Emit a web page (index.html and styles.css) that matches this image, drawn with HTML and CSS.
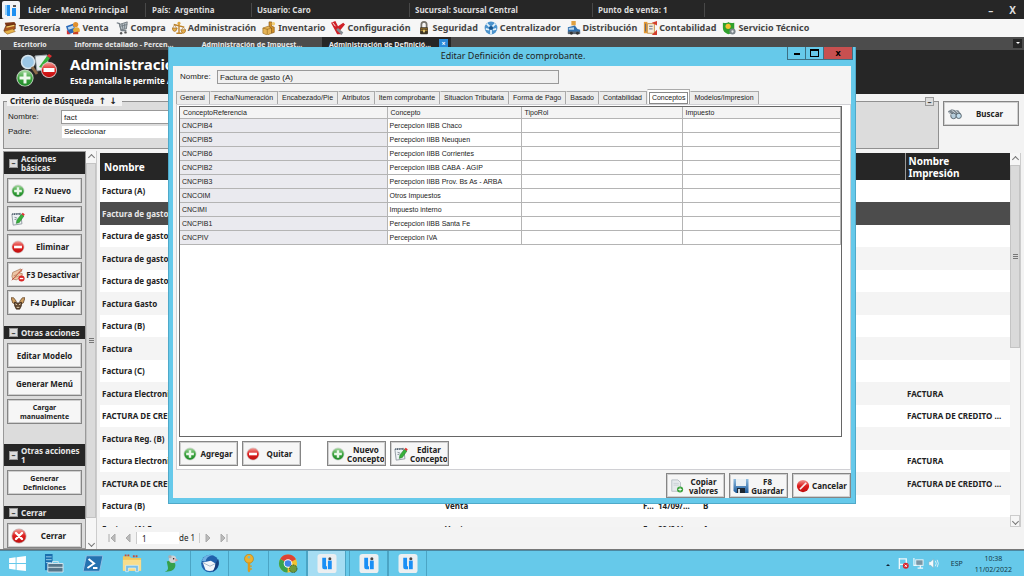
FILE: index.html
```html
<!DOCTYPE html>
<html lang="es">
<head>
<meta charset="utf-8">
<title>Líder - Menú Principal</title>
<link rel="stylesheet" href="styles.css">
</head>
<body>
<svg class="sprite" aria-hidden="true">
  <defs>
    <linearGradient id="gGreen" x1="0" y1="0" x2="0" y2="1"><stop offset="0" stop-color="#a5d8a0"/><stop offset=".5" stop-color="#3aa33c"/><stop offset="1" stop-color="#1f8a2a"/></linearGradient>
    <linearGradient id="gRed" x1="0" y1="0" x2="0" y2="1"><stop offset="0" stop-color="#f29a94"/><stop offset=".5" stop-color="#dd1c1c"/><stop offset="1" stop-color="#c01010"/></linearGradient>
    <linearGradient id="gBlue" x1="0" y1="0" x2="0" y2="1"><stop offset="0" stop-color="#8fbde0"/><stop offset="1" stop-color="#1c5a9c"/></linearGradient>
  </defs>
  <symbol id="i-logo" viewBox="0 0 18 18"><rect width="18" height="18" rx="2" fill="#f1f3f5"/><rect x="3" y="4" width="2" height="10" fill="#8fcbf8"/><rect x="5" y="4" width="3" height="11" fill="#1e90f0"/><rect x="11" y="4" width="3" height="2" fill="#555"/><rect x="10" y="7" width="4" height="8" fill="#1e90f0"/></symbol>
  <symbol id="i-app" viewBox="0 0 20 20"><rect width="20" height="20" rx="3" fill="#eceff1"/><path d="M5 4h4v9h1v3H7q-2 0-2-2z" fill="#1a8ff5"/><circle cx="13" cy="5" r="1.600" fill="#444"/><rect x="11" y="7" width="4" height="9" fill="#1a8ff5"/></symbol>
  <symbol id="i-plus" viewBox="0 0 16 16"><circle cx="8" cy="8" r="7.4" fill="#cfd6cf"/><circle cx="8" cy="8" r="6.6" fill="url(#gGreen)"/><path d="M6.6 3.6h2.8v3h3v2.8h-3v3H6.6v-3h-3V6.600h3z" fill="#e9f7e8"/></symbol>
  <symbol id="i-minus" viewBox="0 0 16 16"><circle cx="8" cy="8" r="7.400" fill="#d9caca"/><circle cx="8" cy="8" r="6.600" fill="url(#gRed)"/><rect x="3.500" y="6.500" width="9" height="3" fill="#fff"/></symbol>
  <symbol id="i-x" viewBox="0 0 16 16"><circle cx="8" cy="8" r="7.600" fill="#c8b5b5"/><circle cx="8" cy="8" r="6.800" fill="url(#gRed)"/><path d="M5 5l6 6M11 5l-6 6" stroke="#fff" stroke-width="2.400" stroke-linecap="round"/></symbol>
  <symbol id="i-cancel" viewBox="0 0 16 16"><circle cx="8" cy="8" r="7" fill="url(#gRed)"/><path d="M3.800 11L11 3.800l1.400 1.400L5.200 12.400z" fill="#f7eded"/></symbol>
  <symbol id="i-edit" viewBox="0 0 16 16"><path d="M1 2.500l10-1 1.500 12-10 1.500z" fill="#eef2f5" stroke="#8a949c"/><path d="M1.500 2.500h10" stroke="#456" stroke-dasharray="1 1" stroke-width="2"/><path d="M6 13l.8-4L12 2.500l2.800 2L9.500 12z" fill="#37b03a" stroke="#22772a" stroke-width=".6"/><path d="M12 2.500L13.300 .8l2.400 1.900-1.100 1.800z" fill="#e03030"/><path d="M4 6l3 1M4 8.500h2" stroke="#7c8790"/></symbol>
  <symbol id="i-hand" viewBox="0 0 16 16"><path d="M2 5l9-4 1.500 2.500L9 5.500l4 1-1 4-6 3-4-1-1-3z" fill="#eec6a5" stroke="#a4714c" stroke-width=".8"/><path d="M1 14L13 1" stroke="#c23b2a"/><path d="M3 9l5-2M4 11l5-2" stroke="#b58360" stroke-width=".8"/><circle cx="12" cy="12" r="3.500" fill="#da2525"/><rect x="10" y="11.300" width="4" height="1.500" fill="#fff"/></symbol>
  <symbol id="i-masks" viewBox="0 0 16 16"><path d="M0 2l3 0 3 4-1 3-3-1zM16 2l-3 0-3 4 1 3 3-1z" fill="#d0a062" stroke="#53351b" stroke-width=".8"/><path d="M4 7l4 1 4-1 0 4-2 4H6l-2-4z" fill="#5f4630" stroke="#2e1d10" stroke-width=".7"/><path d="M5 9l2 1M11 9l-2 1M6.500 13h3" stroke="#f0dfc0"/></symbol>
  <symbol id="i-save" viewBox="0 0 16 16"><path d="M.5 1h15v14H3L.5 13z" fill="url(#gBlue)"/><rect x="3" y="1" width="10" height="7" fill="#e9f0f4"/><rect x="4" y="10" width="8" height="5" fill="#1d2833"/><rect x="5" y="11" width="2" height="4" fill="#cdd6dc"/></symbol>
  <symbol id="i-copy" viewBox="0 0 16 16"><path d="M2 1h7l3 3v10H2z" fill="#e5e9ec" stroke="#b4bcc2"/><path d="M4 5h6M4 7h6" stroke="#c8d0d5"/><circle cx="11.500" cy="12" r="3.500" fill="#3aa33c"/><path d="M11.500 10v4M9.500 12h4" stroke="#fff"/></symbol>
  <symbol id="i-binoc" viewBox="0 0 16 12"><path d="M1 3l4-2 4 1 3 0 3 4-1 3-8-1-4-3z" fill="#7b868e"/><circle cx="7" cy="8" r="3" fill="#b6cddb" stroke="#59656e"/><circle cx="12.500" cy="8" r="2.800" fill="#c0dbea" stroke="#59656e"/><path d="M2 4l3 3M5 2l4 3M9 2l3 3" stroke="#d3dade"/></symbol>
  <symbol id="i-chest" viewBox="0 0 16 16"><path d="M2 2l11-1 2 3-11 4z" fill="#7a3514"/><path d="M3 6l11-2v5L4 13 1 11z" fill="#a9551f" stroke="#54260d" stroke-width=".7"/><path d="M1 12l10-3 3 3-9 3z" fill="#e7b44a" stroke="#8c571a" stroke-width=".6"/><path d="M4 7l9-2" stroke="#f2cf6a" stroke-width="1.500"/></symbol>
  <symbol id="i-people" viewBox="0 0 16 16"><path d="M0 6l8-3 4 9-9 3z" fill="#2b6ab8"/><path d="M2 7l6-2 1 3-6 2z" fill="#b9d8f2"/><circle cx="11" cy="4" r="3" fill="#e0902e"/><path d="M8 11q0-4 4-4t4 5l-6 2z" fill="#e6ac38"/><path d="M1 10l4 5-4 0z" fill="#d53434"/><path d="M8 13l6-1v3H8z" fill="#c84024"/></symbol>
  <symbol id="i-cart" viewBox="0 0 16 16"><path d="M2 2l3 1 2 8h6" fill="none" stroke="#767f86" stroke-width="1.500"/><path d="M5 4l9-3-1 8-6 1z" fill="#b7c0c6" stroke="#6d767c"/><path d="M8 3l1 6M11 3v6M6 6l8-2" stroke="#707a80"/><circle cx="7" cy="14" r="1.400" fill="#555"/><circle cx="12" cy="13" r="1.400" fill="#555"/></symbol>
  <symbol id="i-scale" viewBox="0 0 16 16"><path d="M2 4l12 3M8 3v10M5 14h7" stroke="#c08328" stroke-width="1.600"/><path d="M0 8h6q-1 4-3 4T0 8zM10 10h6q-1 4-3 4t-3-4z" fill="#e5ae4c" stroke="#9c6518" stroke-width=".7"/><path d="M3 4L1 8M3 4l2 4M13 7l-2 3M13 7l2 3" stroke="#a97a35" stroke-width=".7"/><circle cx="8" cy="2.500" r="1.700" fill="#e0a840"/></symbol>
  <symbol id="i-box" viewBox="0 0 16 16"><path d="M1 8l6-2 4 2v6l-5 2-5-2z" fill="#e6b455" stroke="#95661a" stroke-width=".7"/><path d="M6 9v6M1 8l5 1.500L11 8" fill="none" stroke="#95661a" stroke-width=".7"/><path d="M8 1h3v5l3 1v6l-3 1V8L8 6z" fill="#d69428" stroke="#80500f" stroke-width=".7"/><circle cx="13" cy="3" r="2" fill="#f1cd72"/></symbol>
  <symbol id="i-tools" viewBox="0 0 16 16"><path d="M0 2l5-2 3 6 6-4 2 2-6 7 2 4H7z" fill="#cf2027"/><path d="M8 8l6 5-2 3-6-6z" fill="#858d93"/><path d="M2 2l3 4" stroke="#fff"/></symbol>
  <symbol id="i-lock" viewBox="0 0 14 16"><path d="M4 8V4q0-3 3-3t3 3v4" fill="none" stroke="#77736c" stroke-width="2"/><rect x="2.500" y="7" width="9" height="8" rx="1" fill="#3d3423"/><path d="M3 9h8M3 11h8" stroke="#b98d33"/><rect x="6" y="10" width="2" height="3" fill="#efd57c"/></symbol>
  <symbol id="i-globe" viewBox="0 0 16 16"><circle cx="8" cy="8" r="7.300" fill="#4b93cd"/><path d="M3 3l4 4M13 3L9 7M8 9v6M2 9l4 1M14 9l-4 1" stroke="#e4f2fb" stroke-width="2"/><circle cx="8" cy="8" r="2.400" fill="#16558f"/></symbol>
  <symbol id="i-truck" viewBox="0 0 16 16"><path d="M5 0h5v5H5z" fill="#e0a040"/><path d="M1 7l8-2 3 4 3 1v4H1z" fill="#2f6fae"/><path d="M2 8l6-1v3H2z" fill="#b7d5ec"/><path d="M1 12h14v3H1z" fill="#5b6670"/><circle cx="5" cy="14" r="1.700" fill="#333"/><circle cx="12" cy="14" r="1.700" fill="#333"/></symbol>
  <symbol id="i-ledger" viewBox="0 0 16 16"><path d="M1 1h4v13H1z" fill="#e69b35"/><path d="M5 3h8v11H5z" fill="#f6ecd9" stroke="#c58b3c"/><path d="M7 6h4M7 9h4M3 3v9" stroke="#4a5f86"/><path d="M10 2l6-2v5zM10 16l6-6v6z" fill="#d43d2c"/></symbol>
  <symbol id="i-service" viewBox="0 0 16 16"><path d="M1 2q6 1 6-1 2 2 7 1v7q0 5-7 6-6-2-6-7z" fill="#2fa12d"/><circle cx="7" cy="6" r="3" fill="#f4bf2f"/><circle cx="12" cy="12" r="3.500" fill="#7b858b"/><circle cx="12" cy="12" r="1.300" fill="#e5e8ea"/></symbol>
  <symbol id="i-hero" viewBox="0 0 42 34"><path d="M19 2l12-1 2 14-12 2z" fill="#e8edf0" stroke="#9aa4ab"/><path d="M23 13l8-11 3 2-8 10z" fill="#37b03a"/><path d="M31 2l2-2 3 2-2 2z" fill="#e03030"/><circle cx="12" cy="8" r="6.500" fill="#9cc7e6" stroke="#d7e4ec" stroke-width="1.500"/><path d="M16 13l5 7" stroke="#8b6a48" stroke-width="3"/><circle cx="33" cy="16" r="8" fill="#dcc8c8"/><circle cx="33" cy="16" r="7.200" fill="url(#gRed)"/><rect x="27.500" y="14" width="11" height="4" fill="#fff"/><circle cx="9" cy="24" r="8.600" fill="#c9d6c9"/><circle cx="9" cy="24" r="7.700" fill="url(#gGreen)"/><path d="M7.500 18.500h3v4h4v3h-4v4h-3v-4h-4v-3h4z" fill="#eef9ee"/></symbol>
  <symbol id="t-win" viewBox="0 0 18 16"><path d="M0 2.300l7-1v6.200H0zM8 1.200L18 0v7.500H8zM0 8.500h7v6.200l-7-1zM8 8.500h10V16L8 14.800z" fill="#fff"/></symbol>
  <symbol id="t-server" viewBox="0 0 21 20"><rect x="1" width="8" height="17" fill="#1a6fae"/><path d="M2 3h6M2 6h6M2 9h6" stroke="#9fd0ee"/><path d="M4 10h16v9H4z" fill="#56768a" stroke="#d6e6ee"/><path d="M9 10V8h6v2M4 14h16" fill="none" stroke="#d6e6ee"/></symbol>
  <symbol id="t-ps" viewBox="0 0 18 16"><path d="M3 1h15l-3 14H0z" fill="#2572b0" stroke="#8cc1e5"/><path d="M5 4l5 4-6 4M9 12h4" fill="none" stroke="#fff" stroke-width="1.700"/></symbol>
  <symbol id="t-folder" viewBox="0 0 22 20"><path d="M1 2h7l2 2h11v14H1z" fill="#f0c75c"/><path d="M3 1h6M12 2h6" stroke="#c84c34" stroke-width="2" stroke-dasharray="2 1"/><path d="M1 6h20v12H1z" fill="#f8dd8c"/><path d="M4 19v-7h14v7h-3v-4H7v4z" fill="#79bfe8" stroke="#e6f5fd" stroke-width=".7"/></symbol>
  <symbol id="t-parrot" viewBox="0 0 14 18"><path d="M3 7q3-1 5 0l3 2q1 5-4 7l-6 1q4-2 3-5z" fill="#35a04a"/><circle cx="8.500" cy="5" r="3.500" fill="#cfd3d6"/><circle cx="6" cy="2.500" r="1.600" fill="#a9aeb2"/><path d="M11 4l3 2-3 1z" fill="#d89a9a"/><circle cx="9.500" cy="4.500" r=".7" fill="#311"/></symbol>
  <symbol id="t-bird" viewBox="0 0 22 20"><circle cx="11" cy="10" r="9.700" fill="#2161ab"/><path d="M3 9l9-2 5 3v6q-5 4-11 1z" fill="#f2f6fa"/><path d="M3 9l8 4 6-3" fill="none" stroke="#9fb3c5"/><path d="M2 7Q5-1 14 1q-7 1-8 7z" fill="#6fb1e4"/><path d="M20 5q3 9-6 14 3-6 3-9z" fill="#163f7c"/></symbol>
  <symbol id="t-key" viewBox="0 0 10 20"><circle cx="5" cy="5" r="4.700" fill="#eeb02c" stroke="#ac7410" stroke-width=".6"/><circle cx="5" cy="3.500" r="1.300" fill="#63bddc"/><path d="M3.700 9h2.600v9L5 19.500 3.700 18zM6 12h2v1.500H6zM6 15h2v1.500H6z" fill="#dd9a1c"/></symbol>
  <symbol id="t-chrome" viewBox="0 0 20 20"><circle cx="10" cy="10" r="9.500" fill="#f2c230"/><path d="M10 10L1.800 5.200A9.500 9.500 0 0 1 18.400 5.500z" fill="#dd4335"/><path d="M10 10L1.800 5.200A9.500 9.500 0 0 0 9.500 19.500z" fill="#38a350"/><circle cx="10" cy="10" r="4.500" fill="#fff"/><circle cx="10" cy="10" r="3.500" fill="#3f84e8"/><circle cx="15.500" cy="15.500" r="4" fill="#6d9a3d" stroke="#25461a" stroke-dasharray="1 1"/></symbol>
  <symbol id="y-flag" viewBox="0 0 12 12"><path d="M1.500 0v12M2 1h7v6H2" fill="none" stroke="#eef8fc" stroke-width="1.500"/><circle cx="8.500" cy="8.500" r="3.200" fill="#d8242c"/><path d="M7.300 7.300l2.400 2.400M9.700 7.300L7.300 9.700" stroke="#fff"/></symbol>
  <symbol id="y-net" viewBox="0 0 12 12"><rect x="3" y="2" width="8" height="6" fill="#7a96a4" stroke="#eef8fc"/><path d="M1 0v8h3M5 11h6M8 8v3" fill="none" stroke="#eef8fc" stroke-width="1.300"/></symbol>
  <symbol id="y-vol" viewBox="0 0 12 12"><path d="M1 4h2l3-3v10L3 8H1z" fill="#f4fafd" stroke="#7fa9bb" stroke-width=".5"/><path d="M8 3q2 3 0 6M10 2q2.500 4 0 8" fill="none" stroke="#e0f1f8"/></symbol>
</svg>

<div class="app">
  <header class="titlebar">
    <svg class="titlebar-logo"><use href="#i-logo"/></svg>
    <span class="tb-cell tb-name">Líder &nbsp;- Menú Principal</span>
    <span class="tb-cell tb-pais">País:&nbsp; Argentina</span>
    <span class="tb-cell tb-user">Usuario: Caro</span>
    <span class="tb-cell tb-suc">Sucursal: Sucursal Central</span>
    <span class="tb-cell tb-pv">Punto de venta: 1</span>
    <span class="tb-cell tb-win"><button type="button" aria-label="Minimizar">–</button><button type="button" aria-label="Cerrar ventana">X</button></span>
  </header>

  <nav class="menubar">
    <button type="button"><svg><use href="#i-chest"/></svg>Tesorería</button>
    <button type="button"><svg><use href="#i-people"/></svg>Venta</button>
    <button type="button"><svg><use href="#i-cart"/></svg>Compra</button>
    <button type="button"><svg><use href="#i-scale"/></svg>Administración</button>
    <button type="button"><svg><use href="#i-box"/></svg>Inventario</button>
    <button type="button"><svg><use href="#i-tools"/></svg>Configuración</button>
    <button type="button"><svg><use href="#i-lock"/></svg>Seguridad</button>
    <button type="button"><svg><use href="#i-globe"/></svg>Centralizador</button>
    <button type="button"><svg><use href="#i-truck"/></svg>Distribución</button>
    <button type="button"><svg><use href="#i-ledger"/></svg>Contabilidad</button>
    <button type="button"><svg><use href="#i-service"/></svg>Servicio Técnico</button>
  </nav>

  <div class="doctabs">
    <button type="button" class="doctab doctab-home">Escritorio</button>
    <button type="button" class="doctab">Informe detallado - Percen...</button>
    <button type="button" class="doctab">Administración de Impuest...</button>
    <div class="doctab-current">
      <button type="button" class="doctab">Administración de Definició...</button>
      <button type="button" class="doctab-close" aria-label="Cerrar pestaña">×</button>
    </div>
    <button type="button" class="doctab-more" aria-label="Más pestañas"></button>
  </div>

  <section class="hero">
    <svg class="hero-icon"><use href="#i-hero"/></svg>
    <div>
      <h1>Administración de Definición</h1>
      <p>Esta pantalla le permite Administrar</p>
    </div>
  </section>

  <section class="search">
    <fieldset>
      <legend>Criterio de Búsqueda <span class="arrows">↑ ↓</span></legend>
      <div class="field"><label for="q-nombre">Nombre:</label><input id="q-nombre" type="text" value="fact"></div>
      <div class="field"><label for="q-padre">Padre:</label><select id="q-padre"><option>Seleccionar</option></select></div>
      <button type="button" class="fold search-fold" aria-label="Contraer">–</button>
    </fieldset>
    <button type="button" class="btn btn-search"><svg><use href="#i-binoc"/></svg><span>Buscar</span></button>
  </section>

  <main class="work">
    <aside class="side">
      <section class="group">
        <h2 class="two"><button type="button" class="fold" aria-label="Contraer">–</button><span>Acciones<br>básicas</span></h2>
        <div class="group-body">
          <button type="button" class="btn"><svg><use href="#i-plus"/></svg><span>F2 Nuevo</span></button>
          <button type="button" class="btn"><svg><use href="#i-edit"/></svg><span>Editar</span></button>
          <button type="button" class="btn"><svg><use href="#i-minus"/></svg><span>Eliminar</span></button>
          <button type="button" class="btn full"><svg><use href="#i-hand"/></svg><span>F3 Desactivar</span></button>
          <button type="button" class="btn"><svg><use href="#i-masks"/></svg><span>F4 Duplicar</span></button>
        </div>
      </section>
      <section class="group">
        <h2><button type="button" class="fold" aria-label="Contraer">–</button><span>Otras acciones</span></h2>
        <div class="group-body tall">
          <button type="button" class="btn"><span>Editar Modelo</span></button>
          <button type="button" class="btn"><span>Generar Menú</span></button>
          <button type="button" class="btn small"><span>Cargar manualmente</span></button>
        </div>
      </section>
      <section class="group">
        <h2 class="two"><button type="button" class="fold" aria-label="Contraer">–</button><span>Otras acciones<br>1</span></h2>
        <div class="group-body">
          <button type="button" class="btn small"><span>Generar Definiciones</span></button>
        </div>
      </section>
      <section class="group">
        <h2><button type="button" class="fold" aria-label="Contraer">–</button><span>Cerrar</span></h2>
        <div class="group-body last">
          <button type="button" class="btn"><svg class="big"><use href="#i-x"/></svg><span>Cerrar</span></button>
        </div>
      </section>
    </aside>
    <div class="scroll scroll-side" aria-hidden="true"><i class="up"></i><i class="thumb"></i><i class="track"></i><i class="down"></i></div>

    <div class="list">
      <div class="list-view">
        <div class="list-table">
          <table>
            <colgroup><col class="c-name"><col class="c-mod"><col class="c-f"><col class="c-date"><col class="c-let"><col class="c-imp"></colgroup>
            <thead><tr><th>Nombre</th><th></th><th></th><th></th><th></th><th class="imp">Nombre<br>Impresión</th></tr></thead>
            <tbody>
              <tr><td>Factura (A)</td><td></td><td></td><td></td><td></td><td></td></tr>
              <tr class="selected"><td>Factura de gasto (A)</td><td></td><td></td><td></td><td></td><td></td></tr>
              <tr><td>Factura de gasto (B)</td><td></td><td></td><td></td><td></td><td></td></tr>
              <tr><td>Factura de gasto (C)</td><td></td><td></td><td></td><td></td><td></td></tr>
              <tr><td>Factura de gasto (M)</td><td></td><td></td><td></td><td></td><td></td></tr>
              <tr><td>Factura Gasto</td><td></td><td></td><td></td><td></td><td></td></tr>
              <tr><td>Factura (B)</td><td></td><td></td><td></td><td></td><td></td></tr>
              <tr><td>Factura</td><td></td><td></td><td></td><td></td><td></td></tr>
              <tr><td>Factura (C)</td><td></td><td></td><td></td><td></td><td></td></tr>
              <tr><td>Factura Electronica</td><td></td><td></td><td></td><td></td><td>FACTURA</td></tr>
              <tr><td>FACTURA DE CREDITO</td><td></td><td></td><td></td><td></td><td>FACTURA DE CREDITO ...</td></tr>
              <tr><td>Factura Reg. (B)</td><td></td><td></td><td></td><td></td><td></td></tr>
              <tr><td>Factura Electronica</td><td></td><td></td><td></td><td></td><td>FACTURA</td></tr>
              <tr><td>FACTURA DE CREDITO</td><td></td><td></td><td></td><td></td><td>FACTURA DE CREDITO ...</td></tr>
              <tr><td>Factura (B)</td><td>Venta</td><td>F...</td><td>14/09/...</td><td>B</td><td></td></tr>
              <tr><td>Factura (A) Exp</td><td>Venta</td><td>F</td><td>29/04/</td><td>A</td><td></td></tr>
            </tbody>
          </table>
        </div>
        <div class="scroll scroll-list" aria-hidden="true"><i class="up"></i><i class="thumb"></i><i class="track"></i><i class="down"></i></div>
      </div>
      <div class="pager">
        <button type="button" class="pg" aria-label="Primera"><svg viewBox="0 0 8 8"><path d="M1 0v8M7 0L3 4l4 4z"/></svg></button>
        <button type="button" class="pg" aria-label="Anterior"><svg viewBox="0 0 8 8"><path d="M6 0L2 4l4 4z"/></svg></button>
        <input type="text" value="1" aria-label="Página"><span>de 1</span>
        <button type="button" class="pg" aria-label="Siguiente"><svg viewBox="0 0 8 8"><path d="M2 0l4 4-4 4z"/></svg></button>
        <button type="button" class="pg" aria-label="Última"><svg viewBox="0 0 8 8"><path d="M7 0v8M1 0l4 4-4 4z"/></svg></button>
      </div>
    </div>
  </main>

  <footer class="taskbar">
    <button type="button" class="task start" aria-label="Inicio"><svg><use href="#t-win"/></svg></button>
    <button type="button" class="task" aria-label="Administrador del servidor"><svg><use href="#t-server"/></svg></button>
    <button type="button" class="task" aria-label="PowerShell"><svg><use href="#t-ps"/></svg></button>
    <button type="button" class="task" aria-label="Explorador"><svg><use href="#t-folder"/></svg></button>
    <button type="button" class="task" aria-label="Heidi"><svg><use href="#t-parrot"/></svg></button>
    <button type="button" class="task open" aria-label="Correo"><svg><use href="#t-bird"/></svg></button>
    <button type="button" class="task" aria-label="Claves"><svg><use href="#t-key"/></svg></button>
    <button type="button" class="task open" aria-label="Chrome"><svg><use href="#t-chrome"/></svg></button>
    <button type="button" class="task open current" aria-label="Líder"><svg><use href="#i-app"/></svg></button>
    <button type="button" class="task open" aria-label="Líder"><svg><use href="#i-app"/></svg></button>
    <button type="button" class="task open" aria-label="Líder"><svg><use href="#i-app"/></svg></button>
    <div class="tray">
      <i class="tray-up"></i>
      <svg><use href="#y-flag"/></svg><svg><use href="#y-net"/></svg><svg><use href="#y-vol"/></svg>
      <span class="lang">ESP</span>
      <time class="clock">10:38<br>11/02/2022</time>
    </div>
  </footer>
</div>

<div class="dialog" role="dialog" aria-labelledby="dlg-title">
  <div class="dialog-head">
    <h2 id="dlg-title">Editar Definición de comprobante.</h2>
    <div class="dialog-controls"><button type="button" class="min" aria-label="Minimizar"></button><button type="button" class="max" aria-label="Maximizar"></button><button type="button" class="close" aria-label="Cerrar">x</button></div>
  </div>
  <div class="dialog-body">
    <div class="name-row"><label for="d-nombre">Nombre:</label><input id="d-nombre" type="text" value="Factura de gasto (A)" readonly></div>
    <div class="tabs" role="tablist">
      <button type="button" role="tab">General</button><button type="button" role="tab">Fecha/Numeración</button><button type="button" role="tab">Encabezado/Pie</button><button type="button" role="tab">Atributos</button><button type="button" role="tab">Item comprobante</button><button type="button" role="tab">Situacion Tributaria</button><button type="button" role="tab">Forma de Pago</button><button type="button" role="tab">Basado</button><button type="button" role="tab">Contabilidad</button><button type="button" role="tab" class="on" aria-selected="true"><span>Conceptos</span></button><button type="button" role="tab">Modelos/Impresion</button>
    </div>
    <div class="panel">
      <div class="concepts">
        <table>
          <colgroup><col class="k-ref"><col class="k-con"><col class="k-rol"><col class="k-imp"></colgroup>
          <thead><tr><th>ConceptoReferencia</th><th>Concepto</th><th>TipoRol</th><th>Impuesto</th></tr></thead>
          <tbody>
            <tr><td>CNCPIB4</td><td>Percepcion IIBB Chaco</td><td></td><td></td></tr>
            <tr><td>CNCPIB5</td><td>Percepcion IIBB Neuquen</td><td></td><td></td></tr>
            <tr><td>CNCPIB6</td><td>Percepcion IIBB Corrientes</td><td></td><td></td></tr>
            <tr><td>CNCPIB2</td><td>Percepcion IIBB CABA - AGIP</td><td></td><td></td></tr>
            <tr><td>CNCPIB3</td><td>Percepcion IIBB Prov. Bs As - ARBA</td><td></td><td></td></tr>
            <tr><td>CNCOIM</td><td>Otros Impuestos</td><td></td><td></td></tr>
            <tr><td>CNCIMI</td><td>Impuesto interno</td><td></td><td></td></tr>
            <tr><td>CNCPIB1</td><td>Percepcion IIBB Santa Fe</td><td></td><td></td></tr>
            <tr><td>CNCPIV</td><td>Percepcion IVA</td><td></td><td></td></tr>
          </tbody>
        </table>
      </div>
      <div class="panel-actions">
        <button type="button" class="btn"><svg><use href="#i-plus"/></svg><span>Agregar</span></button>
        <button type="button" class="btn"><svg><use href="#i-minus"/></svg><span>Quitar</span></button>
        <button type="button" class="btn apart"><svg><use href="#i-plus"/></svg><span>Nuevo Concepto</span></button>
        <button type="button" class="btn"><svg><use href="#i-edit"/></svg><span>Editar Concepto</span></button>
      </div>
    </div>
    <div class="dialog-actions">
      <button type="button" class="btn"><svg><use href="#i-copy"/></svg><span>Copiar valores</span></button>
      <button type="button" class="btn"><svg class="big"><use href="#i-save"/></svg><span>F8<br>Guardar</span></button>
      <button type="button" class="btn"><svg><use href="#i-cancel"/></svg><span>Cancelar</span></button>
    </div>
  </div>
</div>
</body>
</html>
```
FILE: styles.css
```css
* { box-sizing: border-box; }

body {
  margin: 0;
  background: #f3f3f3;
  color: #222;
  font: bold 8px/10px "Noto Sans", sans-serif;
}

button, input, select { font: inherit; color: inherit; margin: 0; }
button { padding: 0; border: 0; background: none; }
h1, h2, p { margin: 0; font-size: inherit; }
svg { flex: none; display: block; }
.sprite { position: absolute; width: 0; height: 0; }

.app { display: flex; flex-direction: column; height: 100vh; overflow: hidden; }

/* Title bar */
.titlebar { display: flex; align-items: center; height: 19px; flex: none; background: #262626; color: #dcdcdc; }
.titlebar-logo { width: 18px; height: 18px; margin-left: 2px; }
.tb-cell { padding-left: 6px; border-left: 1px solid #484848; line-height: 14px; white-space: nowrap; }
.tb-name { width: 125px; padding-left: 8px; border-left: 0; font-size: 9px; }
.tb-pais { width: 106px; }
.tb-user { width: 158px; padding-left: 5px; }
.tb-suc { width: 183px; padding-left: 5px; }
.tb-pv { width: 112px; padding-left: 5px; }
.tb-win { display: flex; flex: 1; justify-content: flex-end; gap: 16px; padding-right: 8px; font-size: 10px; }

/* Main menu */
.menubar { display: flex; align-items: center; height: 18px; flex: none; padding-left: 3px; gap: 6px; background: #f6f6f6; color: #444; font-size: 9px; }
.menubar button { display: flex; align-items: center; gap: 2px; white-space: nowrap; }
.menubar svg { width: 14px; height: 14px; }

/* Open documents */
.doctabs { display: flex; height: 13px; flex: none; background: #4c4c4c; color: #e8e8e8; font-size: 7px; }
.doctab { width: 128px; padding-top: 2px; text-align: center; white-space: nowrap; }
.doctab-home { width: 60px; }
.doctab-current { display: flex; gap: 1px; margin-left: 6px; padding-right: 3px; background: #262626; }
.doctab-current .doctab { width: 116px; }
.doctab-close { width: 9px; height: 9px; margin-top: 2px; background: #2a8ad8; color: #fff; line-height: 8px; }
.doctab-more { width: 9px; margin: 2px 2px 2px auto; background: #262626; }
.doctab-more::after { content: ""; display: block; width: 0; margin: 1px auto 0; border: 2px solid transparent; border-top-color: #fff; }

/* Screen heading */
.hero { display: flex; height: 44px; flex: none; padding: 4px 0 0 15px; gap: 12px; margin-left: 1px; background: #262626; color: #fff; white-space: nowrap; }
.hero-icon { width: 42px; height: 34px; }
.hero h1 { font-size: 15px; line-height: 20px; }
.hero p { line-height: 14px; }

/* Search */
.search { display: flex; flex: none; gap: 4px; padding: 2px 5px 2px 3px; }
.search fieldset { position: relative; flex: 1; min-width: 0; margin: 0; padding: 4px 3px 9px; border: 1px solid #909090; background: #dcdcdc; }
.search legend { padding: 0 2px 0 3px; background: #f3f3f3; line-height: 10px; }
.arrows { padding: 0 3px; font: bold 9px/10px "DejaVu Sans", sans-serif; }
.field { display: flex; align-items: center; width: 70%; font: 8px/10px "Liberation Sans", sans-serif; }
.field + .field { margin-top: 1px; }
.field label { width: 54px; padding-left: 1px; }
.field input, .field select { flex: 1; height: 14px; padding: 0 2px; border: 1px solid #999; border-radius: 0; background: #fff; appearance: none; }
.field select { border-color: #ddd; }
.fold { flex: none; width: 9px; height: 9px; border: 1px solid #999; background: #dcdcdc; color: #444; line-height: 6px; text-align: center; }
.search-fold { position: absolute; right: 4px; top: -9px; }

.btn { display: flex; align-items: center; width: 100%; height: 25px; padding: 0 3px; gap: 2px; border: 1px solid #858585; outline: 1px solid #cfcfcf; outline-offset: -2px; background: #f6f6f6; line-height: 9px; }
.btn svg { width: 14px; height: 14px; }
.btn svg.big { width: 16px; height: 16px; }
.btn span { flex: 1; text-align: center; }
.btn.small { font-size: 7px; }
.btn.full { gap: 0; padding-right: 0; white-space: nowrap; }
.btn-search { width: 76px; margin-top: 5px; }
.btn-search svg { width: 15px; }

/* Work area */
.work { display: flex; flex: 1; min-height: 0; padding: 0 3px; border-bottom: 1px solid #777; }
.side { width: 83px; flex: none; overflow: hidden; border: 1px solid #999; background: #dcdcdc; }
.group h2 { display: flex; align-items: center; gap: 3px; height: 13px; padding-left: 5px; background: #262626; color: #e8e8e8; line-height: 9px; white-space: nowrap; }
.group h2.two { height: 22px; }
.group-body { display: flex; flex-direction: column; gap: 3px; padding: 4px 3px 11px; }
.group-body.tall { padding-bottom: 20px; }
.group-body.last { padding-bottom: 0; }

.scroll { display: flex; flex-direction: column; width: 11px; flex: none; background: #f6f6f6; border-right: 1px solid #ccc; }
.scroll i { display: flex; align-items: center; justify-content: center; }
.scroll .up, .scroll .down { height: 12px; flex: none; }
.scroll .up::after, .scroll .down::after { content: ""; width: 4px; height: 4px; border: solid #777; border-width: 1px 0 0 1px; transform: rotate(45deg); }
.scroll .down::after { transform: rotate(225deg); }
.scroll .thumb { background: #dadada; border: 1px solid #c4c4c4; }
.scroll .thumb::after { content: ""; width: 5px; height: 5px; background: repeating-linear-gradient(#777 0 1px, #dadada 1px 2px); }
.scroll-side .thumb { flex: 19; }
.scroll-side .track { flex: 1; }
.scroll-list .thumb { flex: 184; }
.scroll-list .track { flex: 170; }
.scroll-list .down { border: 1px solid #ccc; }

.list { display: flex; flex-direction: column; flex: 1; min-width: 0; padding-top: 2px; padding-left: 3px; }
.list-view { display: flex; flex: 1; min-height: 0; }
.list-table { flex: 1; min-width: 0; overflow: hidden; background: #fff; }
.list table { width: 100%; border-collapse: collapse; table-layout: fixed; }
.c-mod { width: 198px; }
.c-f { width: 15px; }
.c-date { width: 45px; }
.c-let { width: 204px; }
.c-imp { width: 105px; }
.c-name { width: auto; }
.list th { height: 27px; padding: 0 3px 0 4px; background: #262626; color: #fff; font-size: 10px; line-height: 12px; text-align: left; }
.list th.imp { padding-left: 3px; border-left: 1px solid #999; }
.list td { height: 22px; padding: 0 0 0 2px; overflow: hidden; white-space: nowrap; }
.list tr:nth-child(even) td { height: 23px; background: #f4f4f4; }
.list tr.selected td { background: #4c4c4c; color: #e8e8e8; }

.pager { display: flex; align-items: center; height: 22px; flex: none; padding-left: 4px; font-weight: normal; }
.pg { width: 16px; height: 10px; }
.pg svg { width: 8px; height: 8px; margin: auto; fill: #bbb; stroke: #aaa; }
.pager input { width: 43px; height: 12px; padding: 0 5px; border: 0; border-left: 1px solid #ccc; background: #fff; }
.pager span { padding-right: 4px; border-right: 1px solid #ccc; }

/* Task bar */
.taskbar { display: flex; align-items: stretch; height: 26px; flex: none; border-top: 1px solid #4c87a0; background: #66c9ea; }
.task { width: 39px; display: flex; align-items: center; justify-content: center; }
.task svg { width: 20px; height: 19px; }
.task.start { width: 34px; }
.task.start svg { width: 17px; height: 15px; }
.task.open { border: solid #4ba4c4; border-width: 0 1px; }
.task.current { margin-right: 3px; background: #a5ddf3; }
.tray { display: flex; align-items: center; gap: 4px; margin-left: auto; padding-right: 12px; color: #173a48; font-weight: normal; font-size: 7px; }
.tray svg { width: 11px; height: 11px; }
.tray-up { border: 2px solid transparent; border-bottom-color: #123; margin-right: 4px; }
.lang { padding: 0 8px; }
.clock { text-align: center; line-height: 11px; }

/* Dialog */
.dialog { position: absolute; inset: 47px 168px 72px; display: flex; flex-direction: column; padding: 0 4px 5px; background: #66c9ea; border: 1px solid #4fa9c9; border-top: 0; }
.dialog-head { display: flex; height: 19px; flex: none; }
.dialog-head h2 { flex: 1; padding-left: 66px; font-weight: normal; font-size: 9px; line-height: 18px; text-align: center; }
.dialog-controls { display: flex; height: 13px; margin-right: -2px; border: 1px solid #3c6f83; border-top: 0; }
.dialog-controls button { display: grid; place-items: center; width: 18px; border-right: 1px solid #3c6f83; }
.dialog-controls .min::after { content: ""; width: 6px; height: 2px; margin-top: 2px; background: #000; }
.dialog-controls .max::after { content: ""; width: 7px; height: 5px; border: 1px solid #000; border-top-width: 2px; }
.dialog-controls .close { width: 28px; border: 0; background: #c75050; color: #000; font-size: 9px; line-height: 10px; }
.dialog-body { display: flex; flex-direction: column; flex: 1; min-height: 0; padding: 4px 0 0 3px; background: #f4f4f4; font-family: "Liberation Sans", sans-serif; font-weight: normal; }
.name-row { display: flex; align-items: center; padding-left: 4px; margin-bottom: 5px; }
.name-row label { width: 37px; }
.name-row input { width: 51%; height: 14px; padding: 0 2px; border: 1px solid #999; background: #f0f0f0; }
.tabs { display: flex; align-items: flex-end; height: 15px; flex: none; font-size: 7px; }
.tabs button { height: 13px; padding: 0 4px 0 3px; border: 1px solid #aaa; border-left-color: #eee; border-bottom: 0; background: #ececec; white-space: nowrap; }
.tabs button:first-child { border-left-color: #aaa; }
.tabs .on { height: 15px; padding: 1px 1px 0; background: #fff; }
.tabs .on span { display: block; padding: 0 2px; border: 1px solid #888; }
.panel { display: flex; flex-direction: column; flex: 1; min-height: 0; padding: 1px 8px 3px 2px; border: 1px solid #d0d0d4; background: #fff; }
.concepts { flex: 1; min-height: 0; border: 1px solid #666; background: #fff; font-size: 7px; line-height: 9px; }
.concepts table { width: 100%; border-collapse: collapse; table-layout: fixed; }
.k-ref { width: 207px; }
.k-con { width: 134px; }
.k-rol { width: 161px; }
.k-imp { width: auto; }
.concepts th { height: 11px; padding: 0 3px; background: #f4f4f4; border-right: 1px solid #b4b4b4; font-weight: normal; text-align: left; }
.concepts td { height: 14px; padding: 0 2px; border: 1px solid #b4b4b4; border-left: 0; white-space: nowrap; }
.concepts td:first-child { background: #eaeaef; }
.panel-actions { display: flex; gap: 4px; padding-top: 4px; font: bold 8px/9px "Noto Sans", sans-serif; }
.panel-actions .btn, .dialog-actions .btn { width: 59px; }
.panel-actions .apart { margin-left: 22px; }
.dialog-actions { display: flex; flex: none; justify-content: flex-end; gap: 4px; padding: 3px 0 0; font: bold 8px/9px "Noto Sans", sans-serif; }
```
